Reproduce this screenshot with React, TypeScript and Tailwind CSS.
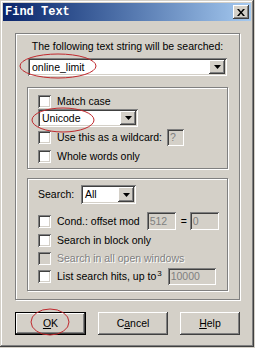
import React from 'react';

const raised =
  'bg-[#d4d0c8] shadow-[inset_-1px_-1px_#404040,inset_1px_1px_#ffffff,inset_-2px_-2px_#808080,inset_2px_2px_#d4d0c8]';
const sunken =
  'shadow-[inset_1px_1px_#808080,inset_-1px_-1px_#ffffff,inset_2px_2px_#404040,inset_-2px_-2px_#d4d0c8]';
const etched = 'border border-[#808080] shadow-[1px_1px_0_#ffffff,inset_1px_1px_0_#ffffff]';

function Arrow() {
  return (
    <svg width="7" height="4" viewBox="0 0 7 4">
      <path d="M0 0h7L3.5 4z" fill="#000" />
    </svg>
  );
}

function Combo({ value, className }: { value: string; className: string }) {
  return (
    <div className={`flex items-stretch bg-white p-[2px] ${sunken} ${className}`}>
      <div className="flex-1 flex items-center pl-[2px] text-black">{value}</div>
      <div className={`w-[16px] flex items-center justify-center ${raised}`}>
        <Arrow />
      </div>
    </div>
  );
}

function Check({ disabled }: { disabled?: boolean }) {
  return (
    <div
      className={`w-[13px] h-[13px] shrink-0 ${disabled ? 'bg-[#d4d0c8]' : 'bg-white'} ${sunken}`}
    />
  );
}

function Field({ value, className }: { value: string; className: string }) {
  return (
    <div className={`flex items-center pl-[3px] bg-[#d4d0c8] text-[#808080] ${sunken} ${className}`}>
      {value}
    </div>
  );
}

function Row({ h, mt, children }: { h: string; mt: string; children: React.ReactNode }) {
  return <div className={`flex items-center ${h} ${mt}`}>{children}</div>;
}

export default function App() {
  return (
    <div className="relative w-[255px] h-[348px] bg-[#d4d0c8] font-['Liberation_Sans',Arial,sans-serif] text-[10.5px] text-black leading-[13px]">
      <div className="w-[254px] h-[347px] p-[3px] shadow-[inset_-1px_-1px_#404040,inset_1px_1px_#d4d0c8,inset_-2px_-2px_#808080,inset_2px_2px_#ffffff]">
        {/* title bar */}
        <div className="h-[18px] flex items-center justify-between bg-linear-to-r from-[#0a246a] to-[#a6caf0] pl-[2px] pr-[2px]">
          <span className="font-['Liberation_Mono',monospace] font-bold text-[12px] text-white">Find Text</span>
          <div className={`w-[16px] h-[14px] flex items-center justify-center ${raised}`}>
            <svg width="8" height="7" viewBox="0 0 8 7">
              <path d="M0 0h2l2 2.5L6 0h2L5 3.5 8 7H6L4 4.5 2 7H0l3-3.5z" fill="#000" />
            </svg>
          </div>
        </div>

        {/* outer frame */}
        <div className={`ml-[12px] mt-[12px] w-[225px] h-[267px] pt-[6px] px-[11px] ${etched}`}>
          <div className="h-[13px] text-center">The following text string will be searched:</div>
          <Combo value="online_limit" className="mt-[5px] h-[18px] w-[199px] ml-[1px]" />

          {/* group 2 */}
          <div className={`mt-[11px] w-[201px] h-[82px] pt-[6px] pl-[10px] ${etched}`}>
            <Row h="h-[14px]" mt="">
              <Check />
              <span className="ml-[6px]">Match case</span>
            </Row>
            <Combo value="Unicode" className="mt-[1px] h-[18px] w-[100px]" />
            <Row h="h-[17px]" mt="mt-[2px]">
              <Check />
              <span className="ml-[6px]">Use this as a wildcard:</span>
              <Field value="?" className="ml-[5px] w-[17px] h-[17px]" />
            </Row>
            <Row h="h-[14px]" mt="mt-[3px]">
              <Check />
              <span className="ml-[6px]">Whole words only</span>
            </Row>
          </div>

          {/* group 3 */}
          <div className={`mt-[9px] w-[201px] h-[113px] pt-[6px] pl-[10px] ${etched}`}>
            <Row h="h-[19px]" mt="">
              <span className="w-[43px]">Search:</span>
              <Combo value="All" className="h-[19px] w-[55px]" />
            </Row>
            <Row h="h-[18px]" mt="mt-[8px]">
              <Check />
              <span className="ml-[6px]">Cond.: offset mod</span>
              <Field value="512" className="ml-[7px] w-[29px] h-[18px]" />
              <span className="ml-[5px]">=</span>
              <Field value="0" className="ml-[3px] w-[29px] h-[18px]" />
            </Row>
            <Row h="h-[14px]" mt="mt-[3px]">
              <Check />
              <span className="ml-[6px]">Search in block only</span>
            </Row>
            <Row h="h-[14px]" mt="mt-[4px]">
              <Check disabled />
              <span className="ml-[6px] text-[#808080] [text-shadow:1px_1px_0_#ffffff]">Search in all open windows</span>
            </Row>
            <Row h="h-[17px]" mt="mt-[3px]">
              <Check />
              <span className="ml-[6px]">
                List search hits, up to<sup className="text-[8px] ml-[1px]">3</sup>
              </span>
              <Field value="10000" className="ml-[6px] w-[48px] h-[17px]" />
            </Row>
          </div>
        </div>

        {/* buttons */}
        <div className="flex ml-[12px] mt-[12px] gap-[12px]">
          <div className="w-[71px] h-[23px] border border-black">
            <div className={`w-full h-full flex items-center justify-center ${raised}`}>
              <span>
                <span className="underline">O</span>K
              </span>
            </div>
          </div>
          <div className={`w-[70px] h-[23px] flex items-center justify-center ${raised}`}>
            <span>
              C<span className="underline">a</span>ncel
            </span>
          </div>
          <div className={`w-[60px] h-[23px] flex items-center justify-center ${raised}`}>
            <span>
              <span className="underline">H</span>elp
            </span>
          </div>
        </div>
      </div>

      {/* red annotation ellipses */}
      <svg className="absolute inset-0 pointer-events-none" width="255" height="348">
        <ellipse cx="58" cy="66" rx="38" ry="12" fill="none" stroke="#c0282d" strokeWidth="1" />
        <ellipse cx="63" cy="120" rx="31" ry="12" fill="none" stroke="#c0282d" strokeWidth="1" />
        <ellipse cx="50" cy="322" rx="19" ry="13" fill="none" stroke="#c0282d" strokeWidth="1" />
      </svg>
    </div>
  );
}
